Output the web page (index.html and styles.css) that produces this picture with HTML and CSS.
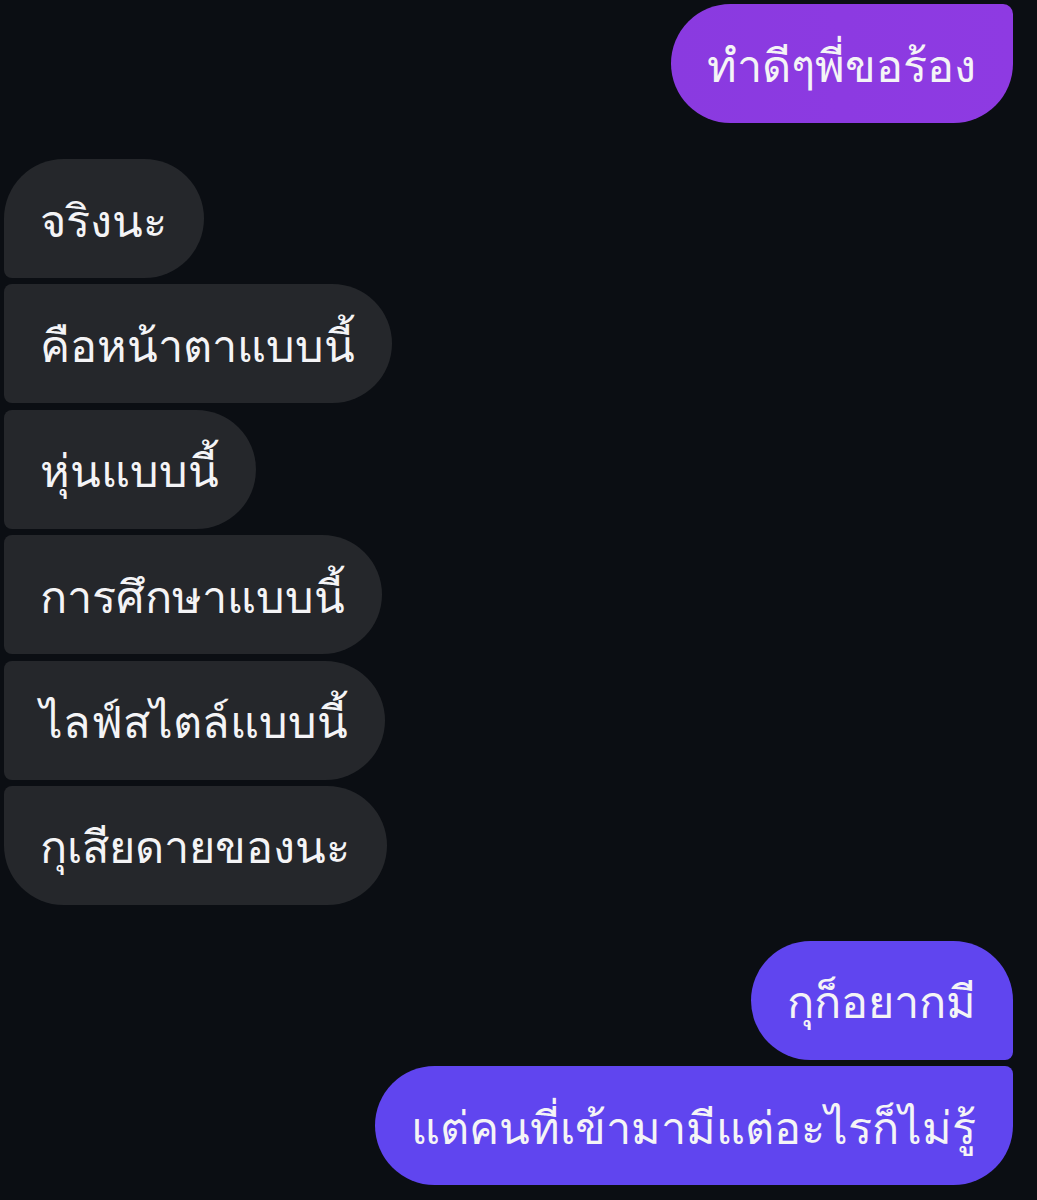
FILE: index.html
```html
<!DOCTYPE html>
<html lang="th">
<head>
<meta charset="utf-8">
<link rel="stylesheet" href="styles.css">
</head>
<body>
<div class="chat">
  <div class="group sent">
    <div class="bubble first-sent tail-top">ทำดีๆพี่ขอร้อง</div>
  </div>
  <div class="group recv">
    <div class="bubble r-first">จริงนะ</div>
    <div class="bubble r-mid">คือหน้าตาแบบนี้</div>
    <div class="bubble r-mid">หุ่นแบบนี้</div>
    <div class="bubble r-mid">การศึกษาแบบนี้</div>
    <div class="bubble r-mid">ไลฟ์สไตล์แบบนี้</div>
    <div class="bubble r-last">กุเสียดายของนะ</div>
  </div>
  <div class="group sent">
    <div class="bubble violet s-first">กุก็อยากมี</div>
    <div class="bubble violet s-last">แต่คนที่เข้ามามีแต่อะไรก็ไม่รู้</div>
  </div>
</div>
</body>
</html>
```

FILE: styles.css
```css
html, body {
  margin: 0;
  padding: 0;
  background: #0b0e13;
}
.chat {
  display: flex;
  flex-direction: column;
  gap: 36px;
  padding: 4px 24px 0 4px;
  font-family: "Noto Sans", "DejaVu Sans", sans-serif;
}
.group {
  display: flex;
  flex-direction: column;
  gap: 6.4px;
}
.sent { align-items: flex-end; }
.recv { align-items: flex-start; }
.bubble {
  box-sizing: border-box;
  height: 119px;
  display: flex;
  align-items: center;
  padding: 4px 37px 0 36px;
  font-size: 45px;
  color: #f4f4f6;
  border-radius: 60px;
  white-space: nowrap;
}
.recv .bubble { background: #25272b; }
.first-sent {
  background: linear-gradient(90deg, #8a3ae0, #8e3ae2);
  border-radius: 60px 10px 60px 60px;
}
.violet { background: #6045ef; }
.s-first { border-radius: 60px 60px 8px 60px; }
.s-last { border-radius: 60px 8px 60px 60px; }
.r-first { border-radius: 60px 60px 60px 8px; }
.r-mid { border-radius: 8px 60px 60px 8px; }
.r-last { border-radius: 8px 60px 60px 60px; }
```
